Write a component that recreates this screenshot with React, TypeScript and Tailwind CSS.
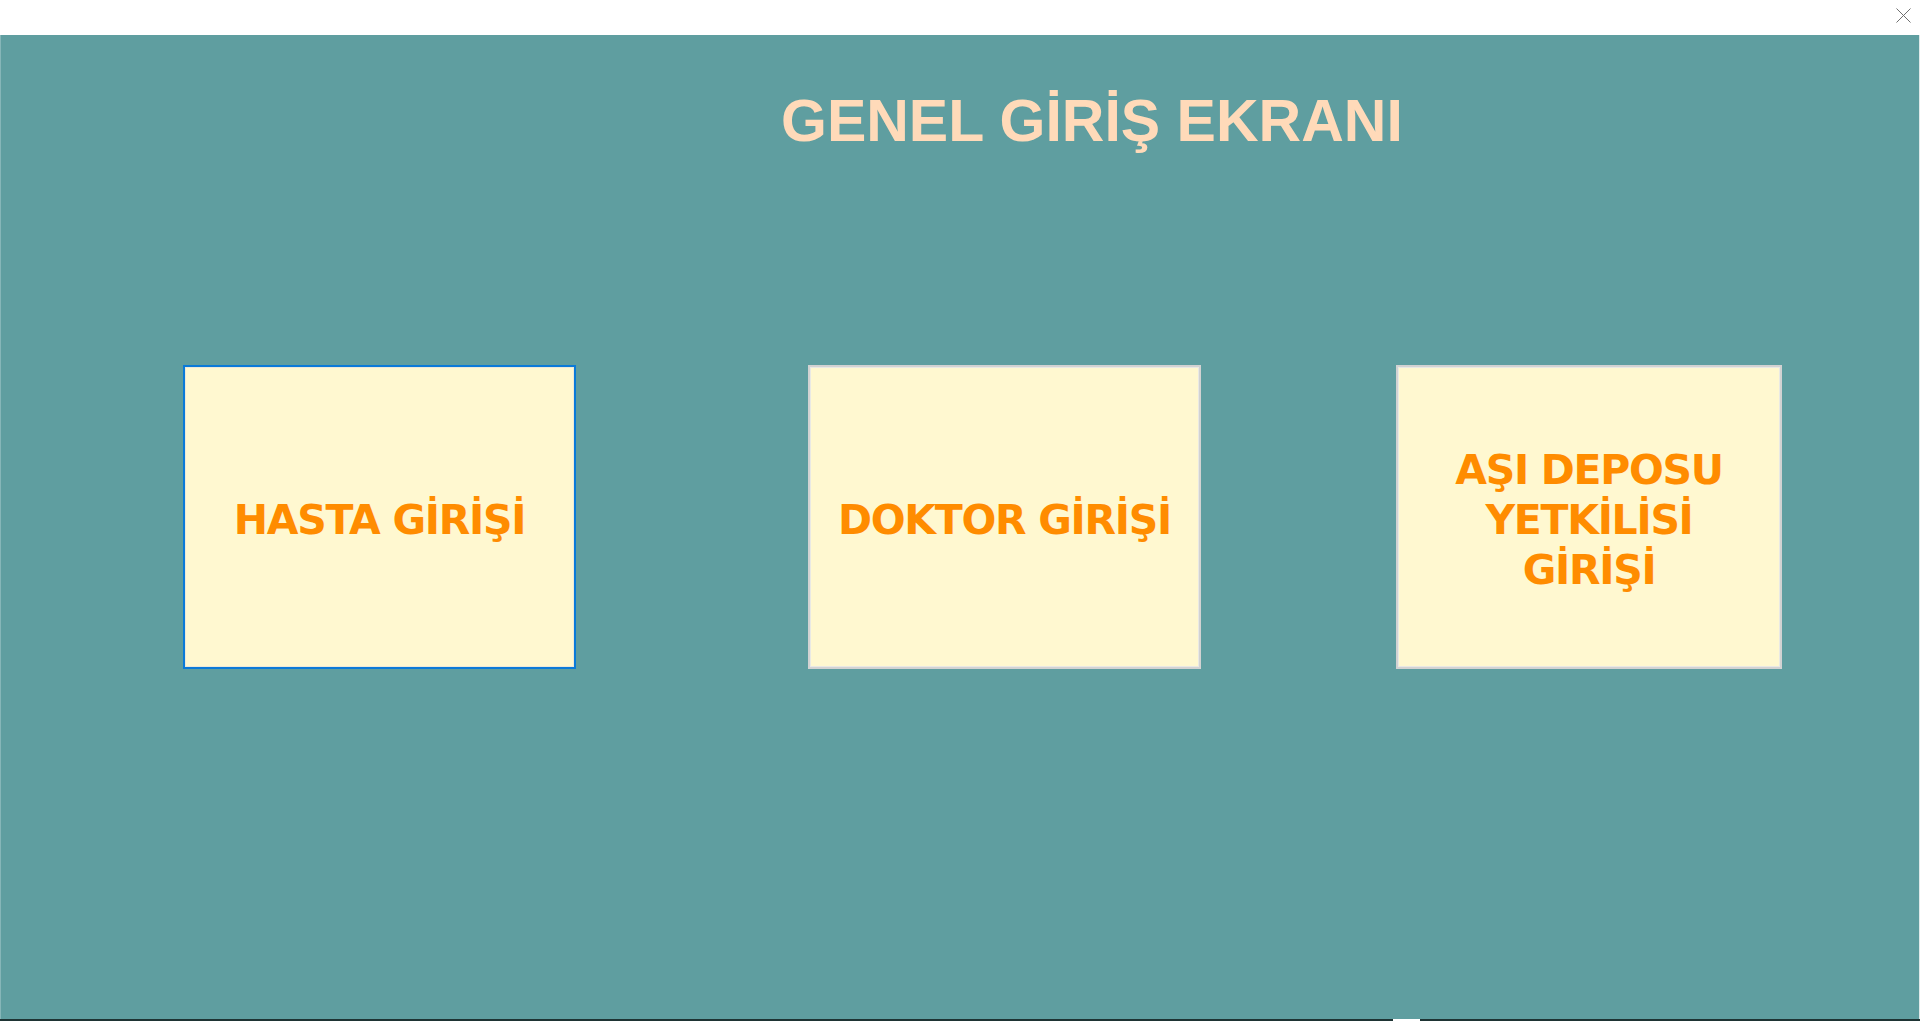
import type { ReactNode } from 'react'

type LoginTile = {
  label: ReactNode
  focused?: boolean
  width: string
  gap: string
}

const tileFont = { fontFamily: '"DejaVu Sans", Verdana, sans-serif' }

function CloseIcon() {
  return (
    <svg width="15" height="15" viewBox="0 0 15 15" fill="none">
      <path d="M0.5 0.5 L14.5 14.5 M14.5 0.5 L0.5 14.5" stroke="#6f6f6f" strokeWidth="1" />
    </svg>
  )
}

function Tile({ tile }: { tile: LoginTile }) {
  return (
    <button
      type="button"
      style={tileFont}
      className={`${tile.width} ${tile.gap} h-[304px] shrink-0 flex items-center justify-center pt-[5px] bg-[#fff8d0] border-2 ${
        tile.focused
          ? 'border-[#0a7ad8] shadow-[inset_0_0_0_1px_#ebe8d8]'
          : 'border-[#d2d2d2] shadow-[inset_0_0_0_1px_#e9e9e4]'
      } text-[#ff8c00] font-bold text-[41px] leading-[50px] tracking-[-1.3px] text-center cursor-pointer`}
    >
      <span>{tile.label}</span>
    </button>
  )
}

const tiles: LoginTile[] = [
  { label: 'HASTA GİRİŞİ', focused: true, width: 'w-[393px]', gap: 'ml-[182px]' },
  { label: 'DOKTOR GİRİŞİ', width: 'w-[393px]', gap: 'ml-[232px]' },
  {
    label: (
      <>
        AŞI DEPOSU
        <br />
        YETKİLİSİ
        <br />
        GİRİŞİ
      </>
    ),
    width: 'w-[386px]',
    gap: 'ml-[195px]',
  },
]

export default function App() {
  return (
    <div className="w-[1920px] h-[1021px] flex flex-col bg-white overflow-hidden">
      {/* window caption */}
      <div className="h-[35px] shrink-0 flex items-start justify-end pt-[8px] pr-[9px] bg-white">
        <CloseIcon />
      </div>

      {/* form body */}
      <main className="flex-1 flex flex-col bg-[#5f9ea0] border-l border-l-[#86b6b8] border-r border-r-[#dfe9e9]">
        <h1
          className="ml-[780px] mt-[57px] h-[59px] text-[59px] leading-[59px] font-bold text-[#ffdab9] whitespace-nowrap"
          style={{ fontFamily: '"Liberation Sans", Arial, sans-serif' }}
        >
          GENEL GİRİŞ EKRANI
        </h1>

        <div className="mt-[214px] flex items-start">
          {tiles.map((t, i) => (
            <Tile key={i} tile={t} />
          ))}
        </div>
      </main>

      {/* bottom edge */}
      <div className="h-[2px] shrink-0 flex bg-[#1e3434]">
        <div className="ml-[1393px] w-[27px] bg-white" />
      </div>
    </div>
  )
}
